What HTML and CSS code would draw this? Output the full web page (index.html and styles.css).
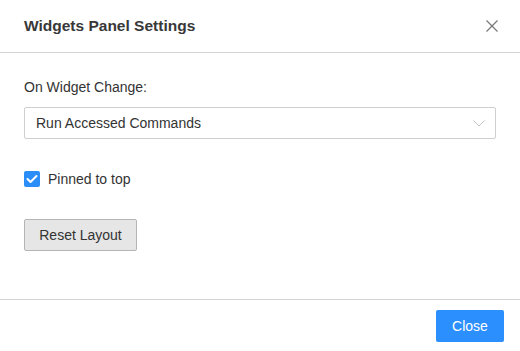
FILE: index.html
```html
<!DOCTYPE html>
<html>
<head>
<meta charset="utf-8">
<link rel="stylesheet" href="styles.css">
</head>
<body>
<div class="dialog">
  <div class="header">
    <div class="title">Widgets Panel Settings</div>
    <button class="close-x" aria-label="Close">
      <svg width="12" height="12" viewBox="0 0 12 12"><path d="M0.5 0.5 L11.5 11.5 M11.5 0.5 L0.5 11.5" stroke="#777" stroke-width="1.2" fill="none"/></svg>
    </button>
  </div>
  <div class="content">
    <div class="label">On Widget Change:</div>
    <div class="select">
      <span>Run Accessed Commands</span>
      <svg width="12" height="7" viewBox="0 0 12 7"><path d="M0.5 0.5 L6 6 L11.5 0.5" stroke="#c4c4c4" stroke-width="1" fill="none"/></svg>
    </div>
    <label class="check-row">
      <span class="checkbox">
        <svg width="12" height="10" viewBox="0 0 12 10"><path d="M1.5 5 L4.5 8 L10.5 2" stroke="#fff" stroke-width="2" fill="none" stroke-linecap="round" stroke-linejoin="round"/></svg>
      </span>
      <span>Pinned to top</span>
    </label>
    <div><button class="btn-reset">Reset Layout</button></div>
  </div>
  <div class="footer">
    <button class="btn-close">Close</button>
  </div>
</div>
</body>
</html>
```
FILE: styles.css
```css
* { box-sizing: border-box; }
html, body { margin: 0; padding: 0; background: #fff; }
body {
  font-family: "Liberation Sans", Arial, sans-serif;
  color: #333;
}
.dialog {
  width: 520px;
  height: 351px;
  display: flex;
  flex-direction: column;
}
.header {
  height: 53px;
  border-bottom: 1px solid #d4d4d4;
  display: flex;
  align-items: center;
  justify-content: space-between;
  padding: 0 22px 0 24px;
  flex: none;
}
.title {
  font-size: 15.5px;
  font-weight: bold;
  color: #383838;
  padding-bottom: 1px;
}
.close-x {
  border: 0;
  background: none;
  padding: 0;
  width: 12px;
  height: 12px;
  display: flex;
  margin-top: -1px;
}
.content {
  flex: 1;
  padding: 24px 24px 0 24px;
}
.label {
  font-size: 14px;
  line-height: 20px;
  margin-bottom: 10px;
}
.select {
  height: 32px;
  border: 1px solid #cfcfcf;
  border-radius: 2px;
  display: flex;
  align-items: center;
  justify-content: space-between;
  padding: 0 10px 0 11px;
  font-size: 14px;
}
.check-row {
  display: flex;
  align-items: center;
  gap: 8px;
  margin-top: 30px;
  height: 20px;
  font-size: 14px;
}
.checkbox {
  width: 16px;
  height: 16px;
  border-radius: 2px;
  background: #2b8ef8;
  display: flex;
  align-items: center;
  justify-content: center;
}
.btn-reset {
  margin-top: 30px;
  height: 32px;
  width: 113px;
  background: #e6e6e6;
  border: 1px solid #b5b5b5;
  border-radius: 2px;
  font-family: inherit;
  font-size: 14px;
  color: #333;
  padding: 0;
}
.footer {
  flex: none;
  height: 52px;
  border-top: 1px solid #d4d4d4;
  display: flex;
  justify-content: flex-end;
  align-items: flex-start;
  padding: 10px 16px 0 0;
}
.btn-close {
  width: 68px;
  height: 32px;
  background: #2b8ffd;
  border: 0;
  border-radius: 2px;
  color: #fff;
  font-family: inherit;
  font-size: 14px;
  padding: 0;
}
```
